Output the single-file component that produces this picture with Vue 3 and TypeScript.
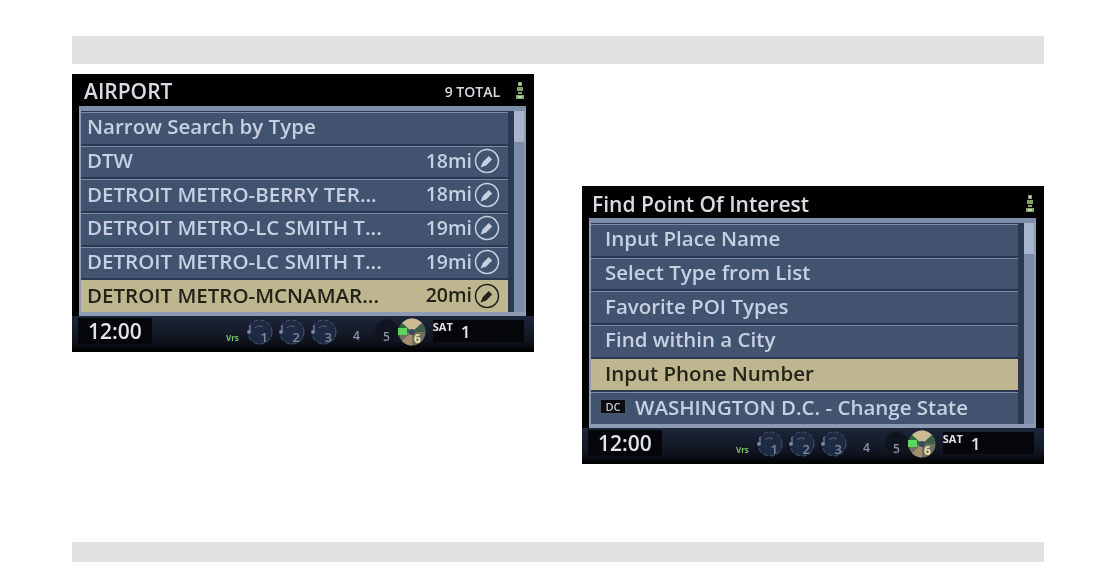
<script setup lang="ts">
interface Row {
  label: string
  dist?: string
  active?: boolean
  tag?: string
}

interface Screen {
  id: string
  title: string
  total?: string
  indented: boolean
  rows: Row[]
}

const screens: Screen[] = [
  {
    id: 'airport',
    title: 'AIRPORT',
    total: '9 TOTAL',
    indented: false,
    rows: [
      { label: 'Narrow Search by Type' },
      { label: 'DTW', dist: '18mi' },
      { label: 'DETROIT METRO-BERRY TER...', dist: '18mi' },
      { label: 'DETROIT METRO-LC SMITH T...', dist: '19mi' },
      { label: 'DETROIT METRO-LC SMITH T...', dist: '19mi' },
      { label: 'DETROIT METRO-MCNAMAR...', dist: '20mi', active: true },
    ],
  },
  {
    id: 'poi',
    title: 'Find Point Of Interest',
    indented: true,
    rows: [
      { label: 'Input Place Name' },
      { label: 'Select Type from List' },
      { label: 'Favorite POI Types' },
      { label: 'Find within a City' },
      { label: 'Input Phone Number', active: true },
      { label: 'WASHINGTON D.C. - Change State', tag: 'DC' },
    ],
  },
]

const dials = [1, 2, 3]
</script>

<template>
  <div class="page">
    <div class="bar bar-top"></div>
    <div class="screens">
      <section v-for="s in screens" :key="s.id" class="screen" :class="s.id">
        <header class="head">
          <span class="title">{{ s.title }}</span>
          <span v-if="s.total" class="total">{{ s.total }}</span>
          <svg class="signal" width="10" height="18" viewBox="0 0 10 18">
            <path d="M3 0h4v4H3zM2 5h6v4H2zM3 10h4v2H3zM1 13h8v4H1z" fill="#7fa868" />
            <path d="M4 1h2v2H4zM3 14h4v2H3z" fill="#c4dcb0" />
          </svg>
        </header>

        <div class="frame">
          <ul class="rows" :class="{ indented: s.indented }">
            <li v-for="(r, i) in s.rows" :key="i" class="row" :class="{ active: r.active }">
              <span v-if="r.tag" class="tag">{{ r.tag }}</span>
              <span class="label">{{ r.label }}</span>
              <template v-if="r.dist">
                <span class="dist">{{ r.dist }}</span>
                <svg class="edit" width="26" height="26" viewBox="0 0 26 26">
                  <circle cx="13" cy="13" r="11.5" fill="none" stroke="currentColor" stroke-width="1.5" />
                  <path d="M6.5 19.5l2.3-5.5 6-6 3.4 3.4-6 6z" fill="currentColor" />
                </svg>
              </template>
            </li>
          </ul>
          <div class="scroll"><div class="thumb"></div></div>
        </div>

        <footer class="foot">
          <div class="clock">12:00</div>
          <span class="vrs">Vrs</span>
          <div class="presets">
            <div v-for="d in dials" :key="d" class="dial">
              <svg width="28" height="28" viewBox="0 0 28 28">
                <circle cx="15" cy="14" r="12" fill="#1e2a42" stroke="#465470" stroke-width="1" stroke-dasharray="5 2" />
                <path d="M5 7v7" stroke="#8290aa" stroke-width="1" />
                <circle cx="4" cy="14" r="1.8" fill="#8290aa" />
                <path d="M10 10a6 6 0 0 1 8-1" fill="none" stroke="#56647f" stroke-width="1" />
              </svg>
              <span class="num">{{ d }}</span>
            </div>
          </div>
          <span class="plain first">4</span>
          <span class="plain second">5</span>
          <svg class="disc" width="30" height="28" viewBox="0 0 30 28">
            <circle cx="15" cy="14" r="13.5" fill="#6e7060" />
            <path d="M15 14L5 5a13.5 13.500 0 0 1 20 0z" fill="#cdbb94" />
            <path d="M15 14L1.5 14a13.5 13.5 0 0 1 3.5-9z" fill="#2f6b3a" />
            <path d="M15 14L28.5 14a13.5 13.5 0 0 0-3.5-9z" fill="#3f6048" />
            <path d="M15 14L5 23a13.5 13.5 0 0 0 10 4.500z" fill="#a58d70" />
            <rect x="1" y="10" width="9" height="7" fill="#5fd35f" />
            <circle cx="15" cy="14" r="3" fill="#39465c" />
            <text x="17" y="25" font-size="12" font-weight="700" font-family="Open Sans, sans-serif" fill="#f0e0b0">6</text>
          </svg>
          <div class="sat">
            <span class="sat-label">SAT</span>
            <span class="sat-num">1</span>
          </div>
        </footer>
      </section>
    </div>
    <div class="bar bar-bottom"></div>
  </div>
</template>

<style>
html, body {
  margin: 0;
  background: #fff;
}
</style>

<style scoped>
.page {
  box-sizing: border-box;
  width: 1116px;
  height: 576px;
  padding: 36px 72px 0;
  display: flex;
  flex-direction: column;
  font-family: "Open Sans", "Liberation Sans", Arial, sans-serif;
}

.bar {
  background: #e2e2e2;
  flex: none;
}
.bar-top {
  height: 28px;
}
.bar-bottom {
  height: 20px;
  margin-top: 78px;
}

.screens {
  display: flex;
  justify-content: space-between;
  align-items: flex-start;
  margin-top: 10px;
  height: 390px;
}

.screen {
  width: 462px;
  height: 278px;
  background: #000;
  display: flex;
  flex-direction: column;
  filter: blur(0.5px);
}
.screen.poi {
  margin-top: 112px;
}

.head {
  height: 32px;
  display: flex;
  align-items: center;
  padding: 2px 9px 0 12px;
  box-sizing: border-box;
  color: #d8dce2;
}
.poi .head {
  padding-left: 10px;
  padding-top: 4px;
}
.title {
  font-size: 21px;
  font-weight: 600;
}
.total {
  margin-left: auto;
  font-size: 14px;
  font-weight: 600;
}
.signal {
  margin-left: 15px;
}
.poi .signal {
  margin-left: auto;
}

.frame {
  height: 210px;
  margin: 0 8px 0 7px;
  box-sizing: border-box;
  border: 2px solid #8c9ab4;
  border-top: 5px solid #7e8da8;
  border-bottom: 4px solid #8c9ab4;
  background: #2a3850;
  display: flex;
}

.rows {
  flex: 1;
  margin: 0;
  padding: 1px 0 0;
  list-style: none;
  display: flex;
  flex-direction: column;
  min-width: 0;
}

.row {
  flex: 1 1 0;
  display: flex;
  align-items: center;
  padding: 0 8px 3px 6px;
  color: #c6d0e2;
  font-size: 20.5px;
  font-weight: 600;
  background: #41536f;
  border-bottom: 2px solid #2a3850;
  box-shadow: inset 0 1px 0 #7b8aa5;
  white-space: nowrap;
  min-width: 0;
  min-height: 0;
}
.row:last-child {
  border-bottom: 0;
}
.rows.indented .row {
  padding-left: 14px;
}

.row.active {
  background: #bdb68f;
  color: #23231a;
  box-shadow: none;
}

.label {
  flex: 1;
}
.dist {
  font-size: 19.5px;
  margin-right: 2px;
}
.edit {
  color: #c6d0e2;
  margin-top: 2px;
}
.active .edit {
  color: #23231a;
}

.tag {
  background: #0c0c10;
  color: #c0c4cc;
  font-size: 11px;
  font-weight: 600;
  width: 26px;
  height: 15px;
  line-height: 13px;
  text-align: center;
  margin: 0 9px 0 -5px;
  flex: none;
  border: 1px solid #4a5568;
  box-sizing: border-box;
}

.scroll {
  width: 10px;
  margin-left: 6px;
  background: #7c8ba6;
}
.thumb {
  height: 31px;
  background: #a7b4cb;
}

.foot {
  flex: 1;
  display: flex;
  align-items: flex-start;
  background: linear-gradient(#1c263a, #10141f 70%, #000);
  padding: 2px 10px 0 6px;
  color: #8a95aa;
}

.clock {
  width: 74px;
  height: 26px;
  background: #05060a;
  color: #dfe3ea;
  font-size: 21px;
  font-weight: 600;
  line-height: 26px;
  padding-left: 10px;
  box-sizing: border-box;
}

.vrs {
  margin: 14px 0 0 74px;
  width: 14px;
  font-size: 8px;
  font-weight: 700;
  color: #79c267;
}

.presets {
  display: flex;
  gap: 4px;
  margin-left: 5px;
}
.dial {
  position: relative;
  width: 28px;
  height: 28px;
}
.dial svg {
  display: block;
}
.num {
  position: absolute;
  right: 5px;
  bottom: 0;
  font-size: 13px;
  font-weight: 600;
  color: #7c89a3;
}

.plain {
  font-size: 12px;
  font-weight: 600;
  margin-top: 9px;
}
.plain.first {
  margin-left: 16px;
}
.plain.second {
  margin: 0 -1px 0 15px;
  padding: 0 8px;
  height: 26px;
  line-height: 38px;
  background: radial-gradient(circle, #10141f 60%, transparent 72%);
}

.sat {
  flex: 1;
  height: 22px;
  margin: 2px 0 0 6px;
  background: #05060a;
  color: #dfe3ea;
  display: flex;
  align-items: flex-start;
}
.sat-label {
  font-size: 11px;
  font-weight: 700;
  line-height: 13px;
}
.sat-num {
  font-size: 17px;
  line-height: 20px;
  margin: 2px 0 0 8px;
  font-weight: 600;
}
</style>
